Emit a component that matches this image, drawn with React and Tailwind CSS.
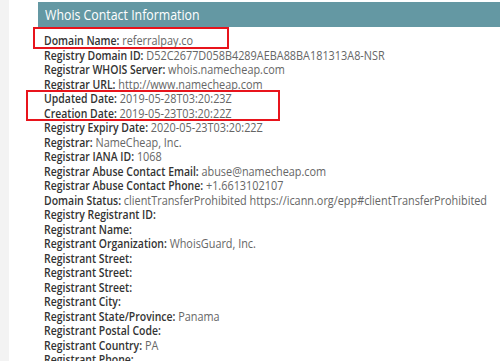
import React from 'react';

const rows = [
  ['Domain Name', 'referralpay.co'],
  ['Registry Domain ID', 'D52C2677D058B4289AEBA88BA181313A8-NSR'],
  ['Registrar WHOIS Server', 'whois.namecheap.com'],
  ['Registrar URL', 'http://www.namecheap.com'],
  ['Updated Date', '2019-05-28T03:20:23Z'],
  ['Creation Date', '2019-05-23T03:20:22Z'],
  ['Registry Expiry Date', '2020-05-23T03:20:22Z'],
  ['Registrar', 'NameCheap, Inc.'],
  ['Registrar IANA ID', '1068'],
  ['Registrar Abuse Contact Email', 'abuse@namecheap.com'],
  ['Registrar Abuse Contact Phone', '+1.6613102107'],
  ['Domain Status', 'clientTransferProhibited https://icann.org/epp#clientTransferProhibited'],
  ['Registry Registrant ID', ''],
  ['Registrant Name', ''],
  ['Registrant Organization', 'WhoisGuard, Inc.'],
  ['Registrant Street', ''],
  ['Registrant Street', ''],
  ['Registrant Street', ''],
  ['Registrant City', ''],
  ['Registrant State/Province', 'Panama'],
  ['Registrant Postal Code', ''],
  ['Registrant Country', 'PA'],
  ['Registrant Phone', ''],
];

export default function App() {
  return (
    <div className="relative flex h-[361px] w-[500px] overflow-hidden bg-white font-['Open_Sans',sans-serif]">
      <div className="w-[9px] shrink-0 bg-[#f3f3f3]" />
      <div className="flex-1 pl-[29px] pt-[2px]">
        <div className="flex h-[25px] items-center bg-[#6498a3] pl-[7px] text-white">
          <span className="origin-left scale-x-[0.87] text-[14.2px] whitespace-nowrap">Whois Contact Information</span>
        </div>
        <div className="origin-left scale-x-[0.87] pl-[7px] pt-[7px] text-[12.5px] whitespace-nowrap">
          {rows.map(([label, value], i) => (
            <div key={i} className="h-[14.5px] leading-[14.5px]">
              <span className="text-[12px] font-semibold text-[#333]">{label}:</span>
              {value && <span className="text-[#666]"> {value}</span>}
            </div>
          ))}
        </div>
      </div>
      <div className="absolute left-[33px] top-[27px] h-[22px] w-[196px] border-2 border-[#e8141c]" />
      <div className="absolute left-[26px] top-[90px] h-[31px] w-[254px] border-2 border-[#e8141c]" />
    </div>
  );
}
